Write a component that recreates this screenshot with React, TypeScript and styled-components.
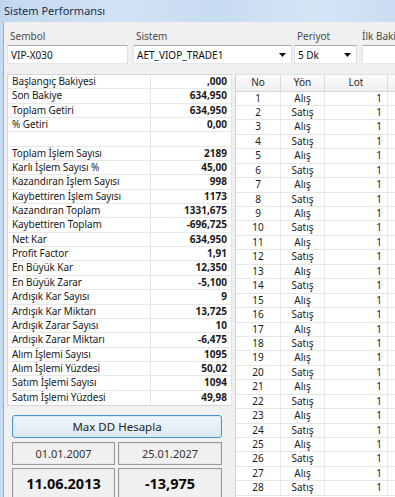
import styled, { createGlobalStyle } from "styled-components";

const GlobalStyle = createGlobalStyle`
  html, body {
    margin: 0;
    padding: 0;
  }
  body {
    font-family: "Noto Sans", "Open Sans", sans-serif;
    background: #f0f0f0;
  }
`;

const Window = styled.div`
  width: 395px;
  height: 497px;
  overflow: hidden;
  display: flex;
  flex-direction: column;
  background: #f0f0f0;
`;

const TitleBar = styled.div`
  flex: none;
  height: 22px;
  box-sizing: border-box;
  padding: 0 0 2px 4px;
  display: flex;
  align-items: center;
  font-size: 11px;
  color: #1b2f4a;
  background: linear-gradient(90deg, #c2d7ef 0%, #d2e2f4 30%, #c7dbf1 55%, #d6e5f6 80%, #cadcf1 100%);
`;

const Body = styled.div`
  flex: 1;
  min-height: 0;
  display: flex;
  flex-direction: column;
  border-left: 3px solid #c5d9f0;
  box-shadow: inset 1px 0 0 #9fb0c4;
  padding: 7px 0 0 4px;
`;

const FieldRow = styled.div`
  display: flex;
  align-items: flex-start;
  white-space: nowrap;
`;

const Field = styled.div<{ $w: number; $ml?: number }>`
  flex: none;
  width: ${(p) => p.$w}px;
  margin-left: ${(p) => p.$ml ?? 0}px;
  display: flex;
  flex-direction: column;
  gap: 2px;
`;

const FieldLabel = styled.div<{ $pl?: number }>`
  font-size: 10px;
  line-height: 14px;
  color: #4a4a4a;
  padding-left: ${(p) => p.$pl ?? 3}px;
`;

const TextBox = styled.div`
  height: 19px;
  box-sizing: border-box;
  border: 1px solid #abadb3;
  border-color: #abadb3 #dbdfe6 #e3e9ef #e2e3ea;
  background: #fff;
  font-size: 10px;
  color: #111;
  padding: 0 3px;
  display: flex;
  align-items: center;
  justify-content: space-between;
`;

const Arrow = styled.svg`
  flex: none;
  margin-right: 2px;
`;

const MainRow = styled.div`
  margin-top: 10px;
  display: flex;
  gap: 3px;
  align-items: flex-start;
`;

const LeftPanel = styled.div`
  flex: none;
  width: 225px;
  display: flex;
  flex-direction: column;
`;

const StatTable = styled.div`
  background: #fff;
  border: 1px solid #d6d6d6;
  border-right-color: #e4e4e4;
`;

const StatRow = styled.div`
  display: grid;
  grid-template-columns: 143px 1fr;
  height: 14.35px;
  box-sizing: border-box;
  border-bottom: 1px solid #e8e8e8;
  font-size: 10px;
  color: #1a1a1a;
  &:last-child {
    border-bottom: none;
  }
`;

const StatLabel = styled.div`
  padding-left: 4px;
  line-height: 13px;
  border-right: 1px solid #e4e4e4;
  white-space: nowrap;
  letter-spacing: -0.1px;
`;

const StatValue = styled.div`
  padding-right: 4px;
  line-height: 13px;
  text-align: right;
  font-weight: 700;
`;

const ButtonArea = styled.div`
  padding: 9px 8px 0 5px;
  display: grid;
  grid-template-columns: 103px 104px;
  column-gap: 3px;
`;

const CalcButton = styled.div`
  grid-column: 1 / -1;
  height: 23px;
  box-sizing: border-box;
  border: 1px solid #4f94cd;
  border-radius: 3px;
  box-shadow: inset 0 0 0 1px #d4ebfa;
  background: linear-gradient(180deg, #f1f6fa 0%, #e6eff6 50%, #dde9f3 100%);
  display: flex;
  align-items: center;
  justify-content: center;
  font-size: 11.5px;
  color: #1e1e1e;
  margin-bottom: 4px;
`;

const InfoBox = styled.div<{ $strong?: boolean }>`
  height: ${(p) => (p.$strong ? 32 : 23)}px;
  margin-bottom: 3px;
  box-sizing: border-box;
  border: 1px solid #9a9a9a;
  box-shadow: inset 0 0 0 1px #e6e6e6;
  background: #f0f0f0;
  display: flex;
  align-items: center;
  justify-content: center;
  font-size: ${(p) => (p.$strong ? 14.5 : 11)}px;
  font-weight: ${(p) => (p.$strong ? 700 : 400)};
  color: ${(p) => (p.$strong ? "#0a0a0a" : "#333")};
  padding-bottom: ${(p) => (p.$strong ? 2 : 0)}px;
`;

const TradeGrid = styled.div`
  flex: none;
  width: 200px;
  background: #fff;
  border-left: 1px solid #d0d0d0;
  border-top: 1px solid #e0e0e0;
`;

const TradeRow = styled.div<{ $head?: boolean }>`
  display: grid;
  grid-template-columns: 45px 44px 63px 48px;
  height: ${(p) => (p.$head ? 16.5 : 14.44)}px;
  box-sizing: border-box;
  border-bottom: 1px solid ${(p) => (p.$head ? "#d5d5d5" : "#e6e6e6")};
  font-size: 10px;
  color: ${(p) => (p.$head ? "#2a2a2a" : "#1a1a1a")};
  background: ${(p) => (p.$head ? "linear-gradient(180deg, #fbfbfb, #f1f1f1)" : "#fff")};
`;

const TradeCell = styled.div<{ $align?: "center" | "right"; $head?: boolean }>`
  text-align: ${(p) => p.$align ?? "center"};
  padding-right: ${(p) => (p.$align === "right" ? 5 : 0)}px;
  line-height: ${(p) => (p.$head ? 15 : 13)}px;
  border-right: 1px solid ${(p) => (p.$head ? "#d8d8d8" : "#ebebeb")};
`;

const stats: [string, string][] = [
  ["Başlangıç Bakiyesi", ",000"],
  ["Son Bakiye", "634,950"],
  ["Toplam Getiri", "634,950"],
  ["% Getiri", "0,00"],
  ["", ""],
  ["Toplam İşlem Sayısı", "2189"],
  ["Karlı İşlem Sayısı %", "45,00"],
  ["Kazandıran İşlem Sayısı", "998"],
  ["Kaybettiren İşlem Sayısı", "1173"],
  ["Kazandıran Toplam", "1331,675"],
  ["Kaybettiren Toplam", "-696,725"],
  ["Net Kar", "634,950"],
  ["Profit Factor", "1,91"],
  ["En Büyük Kar", "12,350"],
  ["En Büyük Zarar", "-5,100"],
  ["Ardışık Kar Sayısı", "9"],
  ["Ardışık Kar Miktarı", "13,725"],
  ["Ardışık Zarar Sayısı", "10"],
  ["Ardışık Zarar Miktarı", "-6,475"],
  ["Alım İşlemi Sayısı", "1095"],
  ["Alım İşlemi Yüzdesi", "50,02"],
  ["Satım İşlemi Sayısı", "1094"],
  ["Satım İşlemi Yüzdesi", "49,98"],
];

const trades = Array.from({ length: 28 }, (_, i) => ({
  no: i + 1,
  side: i % 2 === 0 ? "Alış" : "Satış",
  lot: 1,
}));

const DropArrow = () => (
  <Arrow width="7" height="4" viewBox="0 0 7 4">
    <polygon points="0,0 7,0 3.5,4" fill="#111" />
  </Arrow>
);

const App = () => {
  return (
    <Window>
      <GlobalStyle />
      <TitleBar>Sistem Performansı</TitleBar>
      <Body>
        <FieldRow>
          <Field $w={121}>
            <FieldLabel>Sembol</FieldLabel>
            <TextBox>VIP-X030</TextBox>
          </Field>
          <Field $w={159} $ml={5}>
            <FieldLabel>Sistem</FieldLabel>
            <TextBox>
              AET_VIOP_TRADE1
              <DropArrow />
            </TextBox>
          </Field>
          <Field $w={63} $ml={2}>
            <FieldLabel>Periyot</FieldLabel>
            <TextBox>
              5 Dk
              <DropArrow />
            </TextBox>
          </Field>
          <Field $w={60} $ml={5}>
            <FieldLabel $pl={0}>İlk Bakiye</FieldLabel>
            <TextBox />
          </Field>
        </FieldRow>

        <MainRow>
          <LeftPanel>
            <StatTable>
              {stats.map(([label, value], i) => (
                <StatRow key={i}>
                  <StatLabel>{label}</StatLabel>
                  <StatValue>{value}</StatValue>
                </StatRow>
              ))}
            </StatTable>
            <ButtonArea>
              <CalcButton>Max DD Hesapla</CalcButton>
              <InfoBox>01.01.2007</InfoBox>
              <InfoBox>25.01.2027</InfoBox>
              <InfoBox $strong>11.06.2013</InfoBox>
              <InfoBox $strong>-13,975</InfoBox>
            </ButtonArea>
          </LeftPanel>

          <TradeGrid>
            <TradeRow $head>
              <TradeCell $head>No</TradeCell>
              <TradeCell $head>Yön</TradeCell>
              <TradeCell $head>Lot</TradeCell>
              <TradeCell $head />
            </TradeRow>
            {trades.map((t) => (
              <TradeRow key={t.no}>
                <TradeCell>{t.no}</TradeCell>
                <TradeCell>{t.side}</TradeCell>
                <TradeCell $align="right">{t.lot}</TradeCell>
                <TradeCell />
              </TradeRow>
            ))}
            <TradeRow />
          </TradeGrid>
        </MainRow>
      </Body>
    </Window>
  );
};

export default App;
